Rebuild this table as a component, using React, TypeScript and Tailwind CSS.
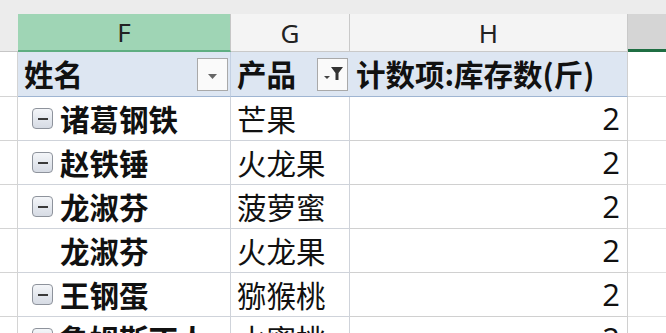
import React from "react";

const CJK = "font-['Noto_Sans_CJK_SC','Noto_Sans',sans-serif]";

type Row = { name: string; product: string; count: number; collapse: boolean };

const ROWS: Row[] = [
  { name: "诸葛钢铁", product: "芒果", count: 2, collapse: true },
  { name: "赵铁锤", product: "火龙果", count: 2, collapse: true },
  { name: "龙淑芬", product: "菠萝蜜", count: 2, collapse: true },
  { name: "龙淑芬", product: "火龙果", count: 2, collapse: false },
  { name: "王钢蛋", product: "猕猴桃", count: 2, collapse: true },
  { name: "鲁姆斯丁人", product: "水蜜桃", count: 2, collapse: true },
];

function CollapseBox() {
  return (
    <span className="w-[21px] h-[21px] rounded-[4px] border border-[#8e939c] bg-gradient-to-b from-[#f4f6f9] to-[#d6dbe4] flex items-center justify-center shrink-0">
      <span className="w-[10px] h-[2px] bg-[#3a3a3a]" />
    </span>
  );
}

function DropButton({ filter }: { filter?: boolean }) {
  return (
    <span className="w-[31px] h-[33px] border border-[#a9a9a9] bg-[#fafafa] flex items-center justify-center shrink-0">
      {filter ? (
        <svg width="26" height="22" viewBox="0 0 26 22">
          <path d="M4 13 L10 13 L7 16 Z" fill="#444" />
          <path d="M11 4 H23 L18.5 10 V17 H15.5 V10 Z" fill="#333" />
        </svg>
      ) : (
        <svg width="11" height="7" viewBox="0 0 11 7" className="mt-[4px]">
          <path d="M1 1 H10 L5.5 6 Z" fill="#666" />
        </svg>
      )}
    </span>
  );
}

export default function App() {
  return (
    <div className="w-[666px] h-[333px] overflow-hidden bg-white">
      {/* top strip */}
      <div className="h-[14px] bg-[#ececec]" />

      {/* column letters */}
      <div className="grid grid-cols-[18px_213px_119px_278px_1fr] h-[38px] font-['Noto_Sans',sans-serif] text-[26px] text-[#222]">
        <div className="bg-[#ececec] border-b border-[#c6c6c6]" />
        <div className="bg-[#9fd5b5] border-b-2 border-[#5fae82] border-r border-r-[#c6c6c6] flex items-center justify-center leading-none">
          F
        </div>
        <div className="bg-[#f4f4f4] border-b border-r border-[#c9c9c9] flex items-center justify-center leading-none">
          G
        </div>
        <div className="bg-[#f4f4f4] border-b border-r border-[#c9c9c9] flex items-center justify-center leading-none">
          H
        </div>
        <div className="bg-[#d5d5d5] border-b-[3px] border-[#1f6e43]" />
      </div>

      {/* pivot header row */}
      <div className={`grid grid-cols-[18px_213px_119px_278px_1fr] h-[45px] ${CJK} text-[29.5px] font-bold text-[#111]`}>
        <div className="border-b border-r border-[#d4d4d4]" />
        <div className="bg-[#dde6f2] border-b border-[#9fb5d2] border-r border-r-[#c3d0e2] flex items-center justify-between pl-[6px] pr-[2px]">
          <span className="leading-none">姓名</span>
          <DropButton />
        </div>
        <div className="bg-[#dde6f2] border-b border-[#9fb5d2] flex items-center justify-between pl-[6px] pr-[2px]">
          <span className="leading-none">产品</span>
          <DropButton filter />
        </div>
        <div className="bg-[#dde6f2] border-b border-[#9fb5d2] border-r border-r-[#d0d0d0] flex items-center pl-[6px]">
          <span className="leading-none whitespace-nowrap">计数项:库存数(斤)</span>
        </div>
        <div className="border-b border-[#dadada]" />
      </div>

      {/* data rows */}
      {ROWS.map((r, i) => (
        <div
          key={i}
          className={`grid grid-cols-[18px_213px_119px_278px_1fr] h-[44px] ${CJK} text-[29.5px] text-[#111]`}
        >
          <div className="border-b border-r border-[#d4d4d4]" />
          <div className="border-b border-r border-[#cfd3da] flex items-center gap-[7px] pl-[14px]">
            {r.collapse ? <CollapseBox /> : <span className="w-[21px] shrink-0" />}
            <span className="font-bold leading-none whitespace-nowrap">{r.name}</span>
          </div>
          <div className="border-b border-r border-[#cfd3da] flex items-center pl-[6px]">
            <span className="leading-none whitespace-nowrap">{r.product}</span>
          </div>
          <div className="border-b border-r border-[#d0d0d0] flex items-center justify-end pr-[7px] font-['Open_Sans',sans-serif] text-[31px]">
            <span className="leading-none">{r.count}</span>
          </div>
          <div className="border-b border-[#e0e0e0]" />
        </div>
      ))}
    </div>
  );
}
